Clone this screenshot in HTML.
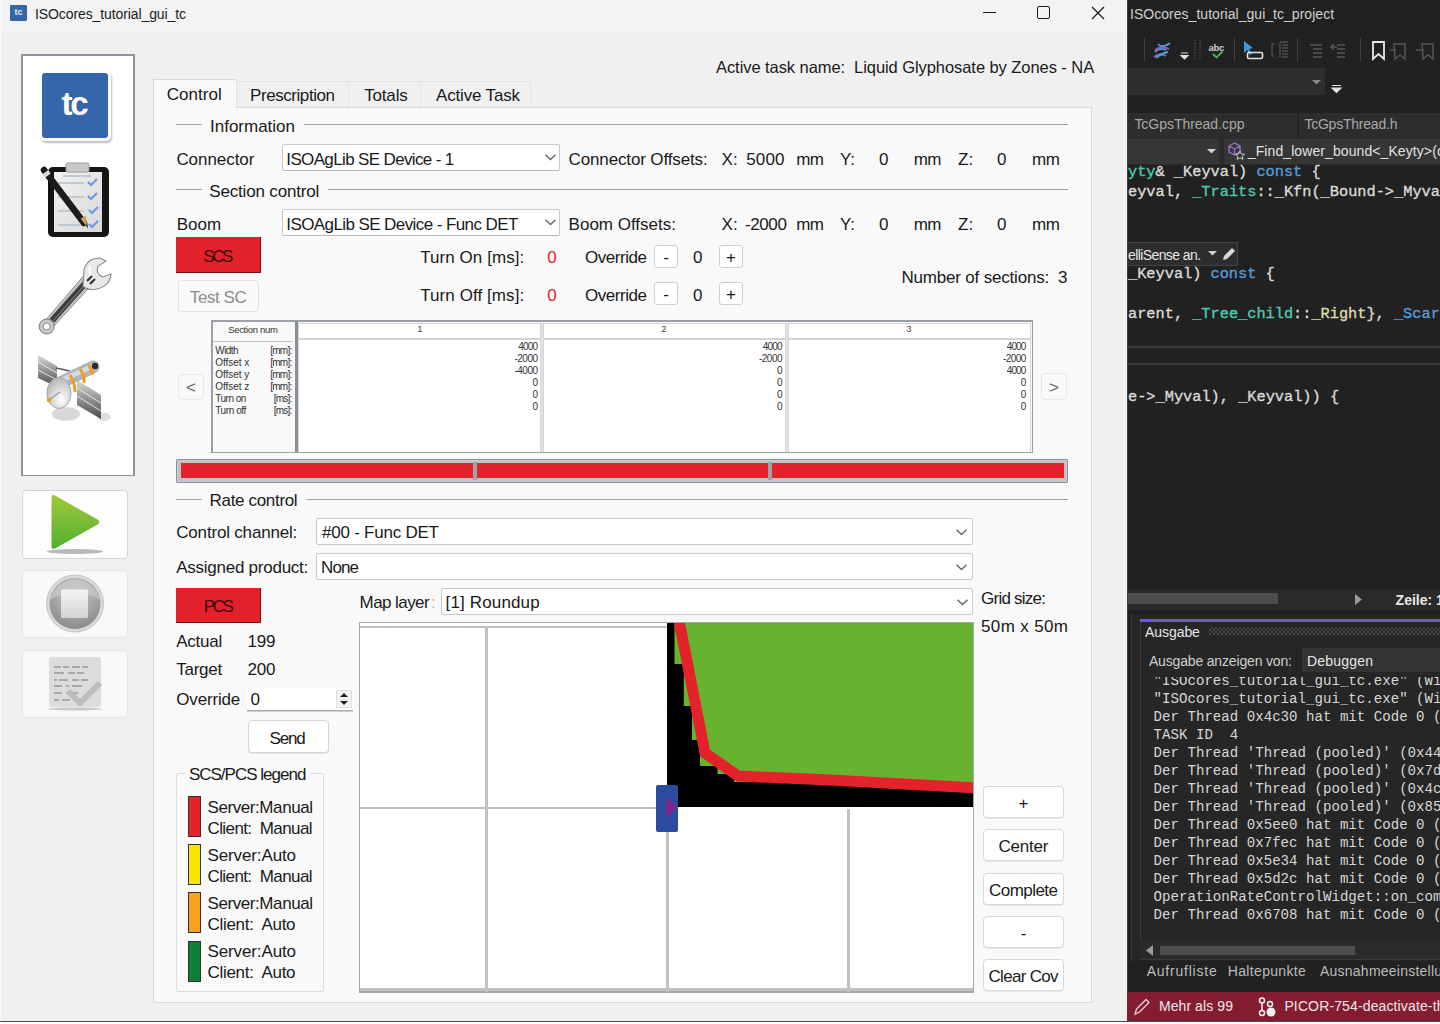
<!DOCTYPE html><html><head><meta charset="utf-8"><style>
html,body{margin:0;padding:0;width:1440px;height:1024px;overflow:hidden;background:#fff;}
.t{position:absolute;white-space:pre;font-family:'Liberation Sans',sans-serif;}
.r{position:absolute;box-sizing:border-box;}
svg{position:absolute;overflow:visible;}
</style></head><body>

<div class="r" style="left:0px;top:0px;width:1127px;height:1021px;background:#f0f0f0;"></div>
<div class="r" style="left:0px;top:0px;width:1127px;height:32px;background:#f3f3f3;"></div>
<div class="r" style="left:0px;top:0px;width:1px;height:1021px;background:#fafafa;"></div>
<div class="r" style="left:0px;top:1021px;width:1440px;height:3px;background:#ffffff;"></div>
<div class="r" style="left:10px;top:5px;width:17px;height:16px;background:#3466a9;border-radius:1px;"></div>
<div class="t" style="left:14.50px;top:8.38px;font-size:9px;line-height:9px;color:#e8eef8;letter-spacing:0.000px;font-family:'Liberation Sans',sans-serif;font-weight:bold;">tc</div>
<div class="t" style="left:35.00px;top:7.15px;font-size:14px;line-height:14px;color:#1a1a1a;letter-spacing:-0.098px;font-family:'Liberation Sans',sans-serif;">ISOcores_tutorial_gui_tc</div>
<div class="r" style="left:983px;top:12px;width:13px;height:1px;background:#1a1a1a;"></div>
<div class="r" style="left:1037px;top:6px;width:13px;height:13px;border:1px solid #1a1a1a;border-radius:2px;"></div>
<svg style="left:1091px;top:6px" width="14" height="14"><path d="M1 1L13 13M13 1L1 13" stroke="#1a1a1a" stroke-width="1.2"/></svg>
<div class="t" style="left:716.00px;top:59.03px;font-size:16.5px;line-height:16.5px;color:#1a1a1a;letter-spacing:-0.069px;font-family:'Liberation Sans',sans-serif;">Active&#32;task&#32;name:&#32;&#32;Liquid&#32;Glyphosate&#32;by&#32;Zones&#32;-&#32;NA</div>
<div class="r" style="left:21px;top:54px;width:114px;height:422px;background:#ffffff;border:1px solid #8e949c;border-width:2px 2px 1px 2px;"></div>
<div class="r" style="left:40px;top:71px;width:71px;height:70px;background:#fdfdfd;border-radius:5px;box-shadow:1px 2px 2px rgba(0,0,0,0.25);"></div>
<div class="r" style="left:42px;top:73px;width:66px;height:65px;background:#3466a9;border-radius:3px;"></div>
<div class="t" style="left:61.50px;top:87.07px;font-size:33px;line-height:33px;color:#ffffff;letter-spacing:-2.344px;font-family:'Liberation Sans',sans-serif;font-weight:bold;">tc</div>
<div class="r" style="left:22px;top:490px;width:106px;height:69px;background:#fdfdfd;border:1px solid #d4d4d4;border-radius:4px;"></div>
<div class="r" style="left:22px;top:570px;width:106px;height:68px;background:#f9f9f9;border:1px solid #e6e6e6;border-radius:4px;"></div>
<div class="r" style="left:22px;top:650px;width:106px;height:68px;background:#f9f9f9;border:1px solid #e6e6e6;border-radius:4px;"></div>
<div class="r" style="left:153px;top:107px;width:939px;height:896px;background:#f9f9f9;border:1px solid #dadada;"></div>
<div class="r" style="left:153px;top:79px;width:84px;height:29px;background:#f9f9f9;border:1px solid #dadada;border-bottom:none;"></div>
<div class="r" style="left:236px;top:81px;width:113px;height:26px;background:#f0f0f0;border:1px solid #e3e3e3;border-bottom:none;"></div>
<div class="r" style="left:349px;top:81px;width:72px;height:26px;background:#f0f0f0;border:1px solid #e3e3e3;border-bottom:none;border-left:none;"></div>
<div class="r" style="left:421px;top:81px;width:110px;height:26px;background:#f0f0f0;border:1px solid #e3e3e3;border-bottom:none;border-left:none;"></div>
<div class="r" style="left:154px;top:106px;width:82px;height:3px;background:#f9f9f9;"></div>
<div class="t" style="left:166.70px;top:85.61px;font-size:17px;line-height:17px;color:#1a1a1a;letter-spacing:0.034px;font-family:'Liberation Sans',sans-serif;">Control</div>
<div class="t" style="left:250.00px;top:86.61px;font-size:17px;line-height:17px;color:#1a1a1a;letter-spacing:-0.432px;font-family:'Liberation Sans',sans-serif;">Prescription</div>
<div class="t" style="left:364.30px;top:86.61px;font-size:17px;line-height:17px;color:#1a1a1a;letter-spacing:-0.201px;font-family:'Liberation Sans',sans-serif;">Totals</div>
<div class="t" style="left:436.00px;top:86.61px;font-size:17px;line-height:17px;color:#1a1a1a;letter-spacing:-0.166px;font-family:'Liberation Sans',sans-serif;">Active&#32;Task</div>
<div class="t" style="left:210.00px;top:117.61px;font-size:17px;line-height:17px;color:#1a1a1a;letter-spacing:-0.002px;font-family:'Liberation Sans',sans-serif;">Information</div>
<div class="r" style="left:176px;top:124px;width:26px;height:1px;background:#a0a0a0;"></div>
<div class="r" style="left:304px;top:124px;width:764px;height:1px;background:#a0a0a0;"></div>
<div class="t" style="left:209.30px;top:183.11px;font-size:17px;line-height:17px;color:#1a1a1a;letter-spacing:-0.174px;font-family:'Liberation Sans',sans-serif;">Section&#32;control</div>
<div class="r" style="left:176px;top:189px;width:26px;height:1px;background:#a0a0a0;"></div>
<div class="r" style="left:328px;top:189px;width:740px;height:1px;background:#a0a0a0;"></div>
<div class="t" style="left:209.60px;top:492.11px;font-size:17px;line-height:17px;color:#1a1a1a;letter-spacing:-0.331px;font-family:'Liberation Sans',sans-serif;">Rate&#32;control</div>
<div class="r" style="left:176px;top:499px;width:26px;height:1px;background:#a0a0a0;"></div>
<div class="r" style="left:307px;top:499px;width:761px;height:1px;background:#a0a0a0;"></div>
<div class="t" style="left:176.40px;top:151.11px;font-size:17px;line-height:17px;color:#1a1a1a;letter-spacing:-0.053px;font-family:'Liberation Sans',sans-serif;">Connector</div>
<div class="r" style="left:282px;top:144px;width:278px;height:27px;background:#ffffff;border:1px solid #c9c9c9;border-bottom-color:#b9b9b9;border-radius:2px;"></div>
<div class="t" style="left:286.30px;top:151.11px;font-size:17px;line-height:17px;color:#1a1a1a;letter-spacing:-0.638px;font-family:'Liberation Sans',sans-serif;">ISOAgLib&#32;SE&#32;Device&#32;-&#32;1</div>
<svg style="left:545px;top:154.0px" width="11" height="7"><path d="M0.5 0.8L5.5 5.5L10.5 0.8" stroke="#666" stroke-width="1.4" fill="none"/></svg>
<div class="t" style="left:568.60px;top:151.11px;font-size:17px;line-height:17px;color:#1a1a1a;letter-spacing:-0.140px;font-family:'Liberation Sans',sans-serif;">Connector&#32;Offsets:</div>
<div class="t" style="left:721.60px;top:151.11px;font-size:17px;line-height:17px;color:#1a1a1a;letter-spacing:0.000px;font-family:'Liberation Sans',sans-serif;">X:</div>
<div class="t" style="left:746.20px;top:151.11px;font-size:17px;line-height:17px;color:#1a1a1a;letter-spacing:0.162px;font-family:'Liberation Sans',sans-serif;">5000</div>
<div class="t" style="left:796.30px;top:151.11px;font-size:17px;line-height:17px;color:#1a1a1a;letter-spacing:-0.613px;font-family:'Liberation Sans',sans-serif;">mm</div>
<div class="t" style="left:839.90px;top:151.11px;font-size:17px;line-height:17px;color:#1a1a1a;letter-spacing:0.000px;font-family:'Liberation Sans',sans-serif;">Y:</div>
<div class="t" style="left:879.00px;top:151.11px;font-size:17px;line-height:17px;color:#1a1a1a;letter-spacing:0.000px;font-family:'Liberation Sans',sans-serif;">0</div>
<div class="t" style="left:913.80px;top:151.11px;font-size:17px;line-height:17px;color:#1a1a1a;letter-spacing:-0.613px;font-family:'Liberation Sans',sans-serif;">mm</div>
<div class="t" style="left:958.00px;top:151.11px;font-size:17px;line-height:17px;color:#1a1a1a;letter-spacing:0.000px;font-family:'Liberation Sans',sans-serif;">Z:</div>
<div class="t" style="left:997.00px;top:151.11px;font-size:17px;line-height:17px;color:#1a1a1a;letter-spacing:0.000px;font-family:'Liberation Sans',sans-serif;">0</div>
<div class="t" style="left:1032.00px;top:151.11px;font-size:17px;line-height:17px;color:#1a1a1a;letter-spacing:-0.312px;font-family:'Liberation Sans',sans-serif;">mm</div>
<div class="t" style="left:176.70px;top:216.11px;font-size:17px;line-height:17px;color:#1a1a1a;letter-spacing:0.000px;font-family:'Liberation Sans',sans-serif;">Boom</div>
<div class="r" style="left:282px;top:209px;width:278px;height:27px;background:#ffffff;border:1px solid #c9c9c9;border-bottom-color:#b9b9b9;border-radius:2px;"></div>
<div class="t" style="left:286.30px;top:216.11px;font-size:17px;line-height:17px;color:#1a1a1a;letter-spacing:-0.589px;font-family:'Liberation Sans',sans-serif;">ISOAgLib&#32;SE&#32;Device&#32;-&#32;Func&#32;DET</div>
<svg style="left:545px;top:219.0px" width="11" height="7"><path d="M0.5 0.8L5.5 5.5L10.5 0.8" stroke="#666" stroke-width="1.4" fill="none"/></svg>
<div class="t" style="left:568.60px;top:216.11px;font-size:17px;line-height:17px;color:#1a1a1a;letter-spacing:0.000px;font-family:'Liberation Sans',sans-serif;">Boom&#32;Offsets:</div>
<div class="t" style="left:721.60px;top:216.11px;font-size:17px;line-height:17px;color:#1a1a1a;letter-spacing:0.000px;font-family:'Liberation Sans',sans-serif;">X:</div>
<div class="t" style="left:744.90px;top:216.11px;font-size:17px;line-height:17px;color:#1a1a1a;letter-spacing:-0.367px;font-family:'Liberation Sans',sans-serif;">-2000</div>
<div class="t" style="left:796.30px;top:216.11px;font-size:17px;line-height:17px;color:#1a1a1a;letter-spacing:-0.613px;font-family:'Liberation Sans',sans-serif;">mm</div>
<div class="t" style="left:839.90px;top:216.11px;font-size:17px;line-height:17px;color:#1a1a1a;letter-spacing:0.000px;font-family:'Liberation Sans',sans-serif;">Y:</div>
<div class="t" style="left:879.00px;top:216.11px;font-size:17px;line-height:17px;color:#1a1a1a;letter-spacing:0.000px;font-family:'Liberation Sans',sans-serif;">0</div>
<div class="t" style="left:913.80px;top:216.11px;font-size:17px;line-height:17px;color:#1a1a1a;letter-spacing:-0.613px;font-family:'Liberation Sans',sans-serif;">mm</div>
<div class="t" style="left:958.00px;top:216.11px;font-size:17px;line-height:17px;color:#1a1a1a;letter-spacing:0.000px;font-family:'Liberation Sans',sans-serif;">Z:</div>
<div class="t" style="left:997.00px;top:216.11px;font-size:17px;line-height:17px;color:#1a1a1a;letter-spacing:0.000px;font-family:'Liberation Sans',sans-serif;">0</div>
<div class="t" style="left:1032.00px;top:216.11px;font-size:17px;line-height:17px;color:#1a1a1a;letter-spacing:-0.312px;font-family:'Liberation Sans',sans-serif;">mm</div>
<div class="r" style="left:176px;top:237px;width:85px;height:36px;background:#e3212b;border-right:1px solid #7a1015;border-bottom:1px solid #7a1015;"></div>
<div class="t" style="left:203.30px;top:248.11px;font-size:17px;line-height:17px;color:#3a0a0a;letter-spacing:-2.484px;font-family:'Liberation Sans',sans-serif;">SCS</div>
<div class="r" style="left:178px;top:280px;width:81px;height:32px;background:#fafafa;border:1px solid #e2e2e2;border-radius:3px;"></div>
<div class="t" style="left:189.80px;top:288.61px;font-size:17px;line-height:17px;color:#8c8c8c;letter-spacing:-0.419px;font-family:'Liberation Sans',sans-serif;">Test&#32;SC</div>
<div class="t" style="left:420.20px;top:249.11px;font-size:17px;line-height:17px;color:#1a1a1a;letter-spacing:0.062px;font-family:'Liberation Sans',sans-serif;">Turn&#32;On&#32;[ms]:</div>
<div class="t" style="left:420.20px;top:286.61px;font-size:17px;line-height:17px;color:#1a1a1a;letter-spacing:0.083px;font-family:'Liberation Sans',sans-serif;">Turn&#32;Off&#32;[ms]:</div>
<div class="t" style="left:547.30px;top:249.11px;font-size:17px;line-height:17px;color:#e3212b;letter-spacing:0.000px;font-family:'Liberation Sans',sans-serif;">0</div>
<div class="t" style="left:547.30px;top:286.61px;font-size:17px;line-height:17px;color:#e3212b;letter-spacing:0.000px;font-family:'Liberation Sans',sans-serif;">0</div>
<div class="t" style="left:585.00px;top:249.11px;font-size:17px;line-height:17px;color:#1a1a1a;letter-spacing:-0.453px;font-family:'Liberation Sans',sans-serif;">Override</div>
<div class="r" style="left:654px;top:245px;width:24px;height:23px;background:#ffffff;border:1px solid #cfcfcf;border-radius:3px;"></div>
<div class="t" style="left:663.17px;top:248.61px;font-size:17px;line-height:17px;color:#1a1a1a;letter-spacing:0.000px;font-family:'Liberation Sans',sans-serif;">-</div>
<div class="t" style="left:693.00px;top:249.11px;font-size:17px;line-height:17px;color:#1a1a1a;letter-spacing:0.000px;font-family:'Liberation Sans',sans-serif;">0</div>
<div class="r" style="left:719px;top:245px;width:24px;height:23px;background:#ffffff;border:1px solid #cfcfcf;border-radius:3px;"></div>
<div class="t" style="left:726.04px;top:248.61px;font-size:17px;line-height:17px;color:#1a1a1a;letter-spacing:0.000px;font-family:'Liberation Sans',sans-serif;">+</div>
<div class="t" style="left:585.00px;top:286.61px;font-size:17px;line-height:17px;color:#1a1a1a;letter-spacing:-0.453px;font-family:'Liberation Sans',sans-serif;">Override</div>
<div class="r" style="left:654px;top:282px;width:24px;height:23px;background:#ffffff;border:1px solid #cfcfcf;border-radius:3px;"></div>
<div class="t" style="left:663.17px;top:286.11px;font-size:17px;line-height:17px;color:#1a1a1a;letter-spacing:0.000px;font-family:'Liberation Sans',sans-serif;">-</div>
<div class="t" style="left:693.00px;top:286.61px;font-size:17px;line-height:17px;color:#1a1a1a;letter-spacing:0.000px;font-family:'Liberation Sans',sans-serif;">0</div>
<div class="r" style="left:719px;top:282px;width:24px;height:23px;background:#ffffff;border:1px solid #cfcfcf;border-radius:3px;"></div>
<div class="t" style="left:726.04px;top:286.11px;font-size:17px;line-height:17px;color:#1a1a1a;letter-spacing:0.000px;font-family:'Liberation Sans',sans-serif;">+</div>
<div class="t" style="left:901.50px;top:269.11px;font-size:17px;line-height:17px;color:#1a1a1a;letter-spacing:-0.192px;font-family:'Liberation Sans',sans-serif;">Number&#32;of&#32;sections:&#32;&#32;3</div>
<div class="r" style="left:178px;top:374px;width:26px;height:26px;background:#f9f9f9;border:1px solid #e8e8e8;border-radius:4px;"></div>
<div class="t" style="left:186.04px;top:379.11px;font-size:17px;line-height:17px;color:#666;letter-spacing:0.000px;font-family:'Liberation Sans',sans-serif;">&lt;</div>
<div class="r" style="left:1041px;top:373px;width:26px;height:27px;background:#f9f9f9;border:1px solid #e8e8e8;border-radius:4px;"></div>
<div class="t" style="left:1049.04px;top:379.11px;font-size:17px;line-height:17px;color:#666;letter-spacing:0.000px;font-family:'Liberation Sans',sans-serif;">&gt;</div>
<div class="r" style="left:211px;top:320px;width:822px;height:133px;background:#f9f9f9;border:1px solid #9aa0a8;border-width:2px 1px 1px 2px;"></div>
<div class="r" style="left:295px;top:321px;width:3px;height:131px;background:#8a9099;"></div>
<div class="r" style="left:213px;top:341px;width:80px;height:1px;background:#c4c4c4;"></div>
<div class="t" style="left:228.20px;top:324.96px;font-size:9.5px;line-height:9.5px;color:#333;letter-spacing:-0.320px;font-family:'Liberation Sans',sans-serif;">Section&#32;num</div>
<div class="t" style="left:215.30px;top:345.54px;font-size:10px;line-height:10px;color:#333;letter-spacing:-0.566px;font-family:'Liberation Sans',sans-serif;">Width</div>
<div class="t" style="left:270.20px;top:345.54px;font-size:10px;line-height:10px;color:#333;letter-spacing:-0.750px;font-family:'Liberation Sans',sans-serif;">[mm]:</div>
<div class="t" style="left:215.30px;top:357.54px;font-size:10px;line-height:10px;color:#333;letter-spacing:-0.040px;font-family:'Liberation Sans',sans-serif;">Offset&#32;x</div>
<div class="t" style="left:270.20px;top:357.54px;font-size:10px;line-height:10px;color:#333;letter-spacing:-0.750px;font-family:'Liberation Sans',sans-serif;">[mm]:</div>
<div class="t" style="left:215.30px;top:369.54px;font-size:10px;line-height:10px;color:#333;letter-spacing:-0.040px;font-family:'Liberation Sans',sans-serif;">Offset&#32;y</div>
<div class="t" style="left:270.20px;top:369.54px;font-size:10px;line-height:10px;color:#333;letter-spacing:-0.750px;font-family:'Liberation Sans',sans-serif;">[mm]:</div>
<div class="t" style="left:215.30px;top:381.54px;font-size:10px;line-height:10px;color:#333;letter-spacing:-0.040px;font-family:'Liberation Sans',sans-serif;">Offset&#32;z</div>
<div class="t" style="left:270.20px;top:381.54px;font-size:10px;line-height:10px;color:#333;letter-spacing:-0.750px;font-family:'Liberation Sans',sans-serif;">[mm]:</div>
<div class="t" style="left:215.30px;top:393.54px;font-size:10px;line-height:10px;color:#333;letter-spacing:-0.516px;font-family:'Liberation Sans',sans-serif;">Turn&#32;on</div>
<div class="t" style="left:273.70px;top:393.54px;font-size:10px;line-height:10px;color:#333;letter-spacing:-0.793px;font-family:'Liberation Sans',sans-serif;">[ms]:</div>
<div class="t" style="left:215.30px;top:405.54px;font-size:10px;line-height:10px;color:#333;letter-spacing:-0.415px;font-family:'Liberation Sans',sans-serif;">Turn&#32;off</div>
<div class="t" style="left:273.70px;top:405.54px;font-size:10px;line-height:10px;color:#333;letter-spacing:-0.793px;font-family:'Liberation Sans',sans-serif;">[ms]:</div>
<div class="r" style="left:298px;top:323px;width:243px;height:129px;background:#ffffff;border:1px solid #d6d6d6;border-bottom:none;"></div>
<div class="r" style="left:299px;top:338px;width:241px;height:2px;background:#d4d4d4;"></div>
<div class="t" style="left:417.36px;top:324.46px;font-size:9.5px;line-height:9.5px;color:#444;letter-spacing:0.000px;font-family:'Liberation Sans',sans-serif;">1</div>
<div class="t" style="left:518.30px;top:341.94px;font-size:10px;line-height:10px;color:#333;letter-spacing:-0.850px;font-family:'Liberation Sans',sans-serif;">4000</div>
<div class="t" style="left:514.50px;top:353.98px;font-size:10px;line-height:10px;color:#333;letter-spacing:-0.520px;font-family:'Liberation Sans',sans-serif;">-2000</div>
<div class="t" style="left:514.50px;top:366.01px;font-size:10px;line-height:10px;color:#333;letter-spacing:-0.520px;font-family:'Liberation Sans',sans-serif;">-4000</div>
<div class="t" style="left:532.44px;top:378.06px;font-size:10px;line-height:10px;color:#333;letter-spacing:0.000px;font-family:'Liberation Sans',sans-serif;">0</div>
<div class="t" style="left:532.44px;top:390.09px;font-size:10px;line-height:10px;color:#333;letter-spacing:0.000px;font-family:'Liberation Sans',sans-serif;">0</div>
<div class="t" style="left:532.44px;top:402.13px;font-size:10px;line-height:10px;color:#333;letter-spacing:0.000px;font-family:'Liberation Sans',sans-serif;">0</div>
<div class="r" style="left:543px;top:323px;width:243px;height:129px;background:#ffffff;border:1px solid #d6d6d6;border-bottom:none;"></div>
<div class="r" style="left:544px;top:338px;width:241px;height:2px;background:#d4d4d4;"></div>
<div class="t" style="left:661.36px;top:324.46px;font-size:9.5px;line-height:9.5px;color:#444;letter-spacing:0.000px;font-family:'Liberation Sans',sans-serif;">2</div>
<div class="t" style="left:762.80px;top:341.94px;font-size:10px;line-height:10px;color:#333;letter-spacing:-0.850px;font-family:'Liberation Sans',sans-serif;">4000</div>
<div class="t" style="left:759.00px;top:353.98px;font-size:10px;line-height:10px;color:#333;letter-spacing:-0.520px;font-family:'Liberation Sans',sans-serif;">-2000</div>
<div class="t" style="left:776.94px;top:366.01px;font-size:10px;line-height:10px;color:#333;letter-spacing:0.000px;font-family:'Liberation Sans',sans-serif;">0</div>
<div class="t" style="left:776.94px;top:378.06px;font-size:10px;line-height:10px;color:#333;letter-spacing:0.000px;font-family:'Liberation Sans',sans-serif;">0</div>
<div class="t" style="left:776.94px;top:390.09px;font-size:10px;line-height:10px;color:#333;letter-spacing:0.000px;font-family:'Liberation Sans',sans-serif;">0</div>
<div class="t" style="left:776.94px;top:402.13px;font-size:10px;line-height:10px;color:#333;letter-spacing:0.000px;font-family:'Liberation Sans',sans-serif;">0</div>
<div class="r" style="left:788px;top:323px;width:243px;height:129px;background:#ffffff;border:1px solid #d6d6d6;border-bottom:none;"></div>
<div class="r" style="left:789px;top:338px;width:241px;height:2px;background:#d4d4d4;"></div>
<div class="t" style="left:906.36px;top:324.46px;font-size:9.5px;line-height:9.5px;color:#444;letter-spacing:0.000px;font-family:'Liberation Sans',sans-serif;">3</div>
<div class="t" style="left:1006.70px;top:341.94px;font-size:10px;line-height:10px;color:#333;letter-spacing:-0.850px;font-family:'Liberation Sans',sans-serif;">4000</div>
<div class="t" style="left:1002.90px;top:353.98px;font-size:10px;line-height:10px;color:#333;letter-spacing:-0.520px;font-family:'Liberation Sans',sans-serif;">-2000</div>
<div class="t" style="left:1006.70px;top:366.01px;font-size:10px;line-height:10px;color:#333;letter-spacing:-0.850px;font-family:'Liberation Sans',sans-serif;">4000</div>
<div class="t" style="left:1020.84px;top:378.06px;font-size:10px;line-height:10px;color:#333;letter-spacing:0.000px;font-family:'Liberation Sans',sans-serif;">0</div>
<div class="t" style="left:1020.84px;top:390.09px;font-size:10px;line-height:10px;color:#333;letter-spacing:0.000px;font-family:'Liberation Sans',sans-serif;">0</div>
<div class="t" style="left:1020.84px;top:402.13px;font-size:10px;line-height:10px;color:#333;letter-spacing:0.000px;font-family:'Liberation Sans',sans-serif;">0</div>
<div class="r" style="left:541px;top:323px;width:2px;height:129px;background:#e2e2e2;"></div>
<div class="r" style="left:786px;top:323px;width:2px;height:129px;background:#e2e2e2;"></div>
<div class="r" style="left:176px;top:459px;width:892px;height:24px;background:#c9cdd2;border:1px solid #8c9199;border-radius:1px;"></div>
<div class="r" style="left:178px;top:461px;width:888px;height:20px;background:#bfc3c8;"></div>
<div class="r" style="left:181px;top:463px;width:883px;height:15px;background:#e3222b;"></div>
<div class="r" style="left:473px;top:462px;width:4px;height:18px;background:#9ea3a8;"></div>
<div class="r" style="left:768px;top:462px;width:4px;height:18px;background:#9ea3a8;"></div>
<div class="t" style="left:176.25px;top:524.11px;font-size:17px;line-height:17px;color:#1a1a1a;letter-spacing:-0.185px;font-family:'Liberation Sans',sans-serif;">Control&#32;channel:</div>
<div class="r" style="left:316px;top:518px;width:657px;height:27px;background:#ffffff;border:1px solid #c9c9c9;border-radius:2px;"></div>
<div class="t" style="left:322.00px;top:524.11px;font-size:17px;line-height:17px;color:#1a1a1a;letter-spacing:-0.230px;font-family:'Liberation Sans',sans-serif;">#00&#32;-&#32;Func&#32;DET</div>
<svg style="left:956px;top:529px" width="11" height="7"><path d="M0.5 0.8L5.5 5.5L10.5 0.8" stroke="#666" stroke-width="1.4" fill="none"/></svg>
<div class="t" style="left:176.25px;top:558.61px;font-size:17px;line-height:17px;color:#1a1a1a;letter-spacing:-0.254px;font-family:'Liberation Sans',sans-serif;">Assigned&#32;product:</div>
<div class="r" style="left:316px;top:553px;width:657px;height:27px;background:#ffffff;border:1px solid #c9c9c9;border-radius:2px;"></div>
<div class="t" style="left:321.00px;top:558.61px;font-size:17px;line-height:17px;color:#1a1a1a;letter-spacing:-0.880px;font-family:'Liberation Sans',sans-serif;">None</div>
<svg style="left:956px;top:564px" width="11" height="7"><path d="M0.5 0.8L5.5 5.5L10.5 0.8" stroke="#666" stroke-width="1.4" fill="none"/></svg>
<div class="r" style="left:176px;top:588px;width:85px;height:35px;background:#e3212b;border-right:1px solid #7a1015;border-bottom:1px solid #7a1015;"></div>
<div class="t" style="left:203.80px;top:598.11px;font-size:17px;line-height:17px;color:#3a0a0a;letter-spacing:-2.484px;font-family:'Liberation Sans',sans-serif;">PCS</div>
<div class="t" style="left:359.60px;top:594.11px;font-size:17px;line-height:17px;color:#1a1a1a;letter-spacing:-0.578px;font-family:'Liberation Sans',sans-serif;">Map&#32;layer</div>
<div class="t" style="left:431.00px;top:594.11px;font-size:17px;line-height:17px;color:#d8b48a;letter-spacing:0.000px;font-family:'Liberation Sans',sans-serif;">:</div>
<div class="r" style="left:441px;top:588px;width:532px;height:27px;background:#ffffff;border:1px solid #c9c9c9;border-radius:2px;"></div>
<div class="t" style="left:445.60px;top:594.11px;font-size:17px;line-height:17px;color:#1a1a1a;letter-spacing:0.139px;font-family:'Liberation Sans',sans-serif;">[1]&#32;Roundup</div>
<svg style="left:957px;top:599px" width="11" height="7"><path d="M0.5 0.8L5.5 5.5L10.5 0.8" stroke="#666" stroke-width="1.4" fill="none"/></svg>
<div class="t" style="left:981.00px;top:590.11px;font-size:17px;line-height:17px;color:#1a1a1a;letter-spacing:-0.753px;font-family:'Liberation Sans',sans-serif;">Grid&#32;size:</div>
<div class="t" style="left:981.00px;top:618.11px;font-size:17px;line-height:17px;color:#1a1a1a;letter-spacing:0.367px;font-family:'Liberation Sans',sans-serif;">50m&#32;x&#32;50m</div>
<div class="t" style="left:176.25px;top:633.11px;font-size:17px;line-height:17px;color:#1a1a1a;letter-spacing:-0.250px;font-family:'Liberation Sans',sans-serif;">Actual</div>
<div class="t" style="left:247.50px;top:633.11px;font-size:17px;line-height:17px;color:#1a1a1a;letter-spacing:-0.180px;font-family:'Liberation Sans',sans-serif;">199</div>
<div class="t" style="left:176.25px;top:661.11px;font-size:17px;line-height:17px;color:#1a1a1a;letter-spacing:-0.247px;font-family:'Liberation Sans',sans-serif;">Target</div>
<div class="t" style="left:247.50px;top:661.11px;font-size:17px;line-height:17px;color:#1a1a1a;letter-spacing:-0.180px;font-family:'Liberation Sans',sans-serif;">200</div>
<div class="t" style="left:176.25px;top:691.11px;font-size:17px;line-height:17px;color:#1a1a1a;letter-spacing:-0.167px;font-family:'Liberation Sans',sans-serif;">Override</div>
<div class="r" style="left:247px;top:688px;width:106px;height:23px;background:#ffffff;border-bottom:1px solid #a8a8a8;box-shadow:0 1px 0 #d0d0d0;"></div>
<div class="t" style="left:250.40px;top:691.11px;font-size:17px;line-height:17px;color:#1a1a1a;letter-spacing:0.000px;font-family:'Liberation Sans',sans-serif;">0</div>
<div class="r" style="left:336px;top:690px;width:16px;height:18px;background:#f3f3f3;border:1px solid #e0e0e0;"></div>
<svg style="left:339px;top:692px" width="10" height="14"><path d="M1 5L5 1L9 5Z M1 9L5 13L9 9Z" fill="#222"/></svg>
<div class="r" style="left:248px;top:720px;width:81px;height:33px;background:#ffffff;border:1px solid #d6d6d6;border-radius:4px;box-shadow:0 1px 0 #e6e6e6;"></div>
<div class="t" style="left:269.50px;top:730.11px;font-size:17px;line-height:17px;color:#1a1a1a;letter-spacing:-1.134px;font-family:'Liberation Sans',sans-serif;">Send</div>
<div class="r" style="left:176px;top:773px;width:148px;height:219px;border:1px solid #dcdcdc;border-radius:2px;"></div>
<div class="r" style="left:186px;top:765px;width:124px;height:15px;background:#f9f9f9;"></div>
<div class="t" style="left:188.90px;top:766.11px;font-size:17px;line-height:17px;color:#1a1a1a;letter-spacing:-0.994px;font-family:'Liberation Sans',sans-serif;">SCS/PCS&#32;legend</div>
<div class="r" style="left:188px;top:796.0px;width:13px;height:41.0px;background:#e3222b;border:1px solid #303030;"></div>
<div class="t" style="left:207.50px;top:798.61px;font-size:17px;line-height:17px;color:#1a1a1a;letter-spacing:-0.419px;font-family:'Liberation Sans',sans-serif;">Server:Manual</div>
<div class="t" style="left:207.50px;top:819.61px;font-size:17px;line-height:17px;color:#1a1a1a;letter-spacing:-0.598px;font-family:'Liberation Sans',sans-serif;">Client:&#32;&#32;Manual</div>
<div class="r" style="left:188px;top:844.2px;width:13px;height:41.0px;background:#f7e600;border:1px solid #303030;"></div>
<div class="t" style="left:207.50px;top:846.81px;font-size:17px;line-height:17px;color:#1a1a1a;letter-spacing:-0.125px;font-family:'Liberation Sans',sans-serif;">Server:Auto</div>
<div class="t" style="left:207.50px;top:867.81px;font-size:17px;line-height:17px;color:#1a1a1a;letter-spacing:-0.598px;font-family:'Liberation Sans',sans-serif;">Client:&#32;&#32;Manual</div>
<div class="r" style="left:188px;top:892.4px;width:13px;height:41.0px;background:#f6a21e;border:1px solid #303030;"></div>
<div class="t" style="left:207.50px;top:895.01px;font-size:17px;line-height:17px;color:#1a1a1a;letter-spacing:-0.419px;font-family:'Liberation Sans',sans-serif;">Server:Manual</div>
<div class="t" style="left:207.50px;top:916.01px;font-size:17px;line-height:17px;color:#1a1a1a;letter-spacing:-0.305px;font-family:'Liberation Sans',sans-serif;">Client:&#32;&#32;Auto</div>
<div class="r" style="left:188px;top:940.6px;width:13px;height:41.0px;background:#0f8035;border:1px solid #303030;"></div>
<div class="t" style="left:207.50px;top:943.21px;font-size:17px;line-height:17px;color:#1a1a1a;letter-spacing:-0.125px;font-family:'Liberation Sans',sans-serif;">Server:Auto</div>
<div class="t" style="left:207.50px;top:964.21px;font-size:17px;line-height:17px;color:#1a1a1a;letter-spacing:-0.305px;font-family:'Liberation Sans',sans-serif;">Client:&#32;&#32;Auto</div>
<div class="r" style="left:359px;top:622px;width:615px;height:371px;background:#ffffff;border:1px solid #a5a9ae;border-width:1px 1px 2px 1px;"></div>
<div class="r" style="left:360px;top:626px;width:307px;height:2px;background:#c0c0c0;"></div>
<div class="r" style="left:485px;top:626px;width:3px;height:182px;background:#c0c0c0;"></div>
<div class="r" style="left:360px;top:807px;width:307px;height:2px;background:#c0c0c0;"></div>
<div class="r" style="left:485px;top:809px;width:3px;height:183px;background:#c0c0c0;"></div>
<div class="r" style="left:666px;top:809px;width:3px;height:183px;background:#c0c0c0;"></div>
<div class="r" style="left:847px;top:809px;width:3px;height:183px;background:#c0c0c0;"></div>
<div class="r" style="left:360px;top:988px;width:613px;height:3px;background:#c0c0c0;"></div>
<svg style="left:0;top:0" width="1440" height="1024">
<defs><clipPath id="mapclip"><rect x="667" y="623" width="306" height="184"/></clipPath></defs><g clip-path="url(#mapclip)">
<rect x="667" y="623" width="306" height="184" fill="#000"/>
<path d="M674.5 623 L674.5 664 L683.8 664 L683.8 706 L692 706 L692 740 L700 740 L700 766 L717.6 766 L717.6 774 L734 774 L734 782 L756 782 L973 786 L973 623 Z" fill="#67b22f"/>
<path d="M678.7 619 L705 753 L738 776 L830 780 L976 788" stroke="#e3222b" stroke-width="11" fill="none" stroke-linejoin="round"/></g>

</svg>
<div class="r" style="left:656px;top:785px;width:22px;height:47px;background:#2c4a9e;border-radius:2px;"></div>
<svg style="left:666px;top:797px" width="12" height="20"><path d="M0 0L12 10L0 20Z" fill="#7a2a8a"/></svg>
<div class="r" style="left:983px;top:786px;width:81px;height:32px;background:#ffffff;border:1px solid #d9d9d9;border-radius:4px;box-shadow:0 1px 0 #e8e8e8;"></div>
<div class="t" style="left:1018.54px;top:794.61px;font-size:17px;line-height:17px;color:#1a1a1a;letter-spacing:0.000px;font-family:'Liberation Sans',sans-serif;">+</div>
<div class="r" style="left:983px;top:829px;width:81px;height:32px;background:#ffffff;border:1px solid #d9d9d9;border-radius:4px;box-shadow:0 1px 0 #e8e8e8;"></div>
<div class="t" style="left:998.50px;top:837.61px;font-size:17px;line-height:17px;color:#1a1a1a;letter-spacing:-0.203px;font-family:'Liberation Sans',sans-serif;">Center</div>
<div class="r" style="left:983px;top:873px;width:81px;height:32px;background:#ffffff;border:1px solid #d9d9d9;border-radius:4px;box-shadow:0 1px 0 #e8e8e8;"></div>
<div class="t" style="left:989.00px;top:881.61px;font-size:17px;line-height:17px;color:#1a1a1a;letter-spacing:-0.536px;font-family:'Liberation Sans',sans-serif;">Complete</div>
<div class="r" style="left:983px;top:916px;width:81px;height:32px;background:#ffffff;border:1px solid #d9d9d9;border-radius:4px;box-shadow:0 1px 0 #e8e8e8;"></div>
<div class="t" style="left:1020.67px;top:924.61px;font-size:17px;line-height:17px;color:#1a1a1a;letter-spacing:0.000px;font-family:'Liberation Sans',sans-serif;">-</div>
<div class="r" style="left:983px;top:959px;width:81px;height:32px;background:#ffffff;border:1px solid #d9d9d9;border-radius:4px;box-shadow:0 1px 0 #e8e8e8;"></div>
<div class="t" style="left:988.50px;top:967.61px;font-size:17px;line-height:17px;color:#1a1a1a;letter-spacing:-0.697px;font-family:'Liberation Sans',sans-serif;">Clear&#32;Cov</div>
<svg style="left:0;top:0" width="300" height="760">
<defs>
<linearGradient id="gpaper" x1="0" y1="0" x2="1" y2="1"><stop offset="0" stop-color="#f2f2f2"/><stop offset="1" stop-color="#d8d8d8"/></linearGradient>
<linearGradient id="gplay" x1="0" y1="0" x2="0" y2="1"><stop offset="0" stop-color="#a2c93a"/><stop offset="1" stop-color="#4fae30"/></linearGradient>
<radialGradient id="gstop" cx="0.5" cy="0.3" r="0.7"><stop offset="0" stop-color="#c8c8c8"/><stop offset="0.55" stop-color="#a8a8a8"/><stop offset="1" stop-color="#8a8a8a"/></radialGradient>
<linearGradient id="gsq" x1="0" y1="0" x2="0" y2="1"><stop offset="0" stop-color="#f4f4f4"/><stop offset="1" stop-color="#d4d4d4"/></linearGradient>
<linearGradient id="gwr" x1="0" y1="0" x2="1" y2="0"><stop offset="0" stop-color="#e8e8e8"/><stop offset="0.5" stop-color="#555"/><stop offset="1" stop-color="#cfcfcf"/></linearGradient>
<linearGradient id="gpanel" x1="0" y1="0" x2="0" y2="1"><stop offset="0" stop-color="#d8d8d8"/><stop offset="1" stop-color="#4a4a4a"/></linearGradient>
<radialGradient id="gdish" cx="0.6" cy="0.7" r="0.7"><stop offset="0" stop-color="#ffffff"/><stop offset="1" stop-color="#b8b8b8"/></radialGradient>
</defs>
<!-- clipboard -->
<rect x="48" y="167" width="61" height="70" rx="5" fill="#141414"/>
<rect x="54" y="172" width="48" height="60" fill="url(#gpaper)"/>
<rect x="66" y="163" width="23" height="9" rx="1.5" fill="#c9c9c9" stroke="#9a9a9a" stroke-width="1"/>
<path d="M63 176h28 M58 183h26 M58 197h26 M58 211h26 M58 225h26" stroke="#b4c0cc" stroke-width="1.6"/>
<path d="M88 182l3 3 6-6 M88 196l3 3 6-6 M89 210l3 3 6-6 M89 224l3 3 6-6" stroke="#6a9be0" stroke-width="2.2" fill="none"/>
<path d="M44 170 L84 223" stroke="#1c1c1c" stroke-width="6.5" stroke-linecap="round"/>
<path d="M45.5 172 L48 175.5" stroke="#dcdcdc" stroke-width="6.5"/>
<path d="M80.5 218.5 L88 228.5 L85.5 216 Z" fill="#c8a060"/>
<path d="M86 225 L88 228.5 L87.2 223.5 Z" fill="#111"/>
<!-- wrench -->
<path d="M43 323.2 L83.5 276 L92.5 284 L50.4 329.8 Z" fill="#c4c4c4" stroke="#8a8a8a" stroke-width="1"/>
<path d="M49.6 318.8 L84.1 280 L88.6 284 L54.4 322.5 Z" fill="#3c3c3c"/>
<path d="M53 321 L86.5 283" stroke="#707070" stroke-width="1.2"/>
<circle cx="46.7" cy="326.5" r="7.5" fill="#c8c8c8" stroke="#7a7a7a" stroke-width="1"/>
<circle cx="46.7" cy="326.5" r="3.4" fill="#ffffff" stroke="#777" stroke-width="0.8"/>
<path d="M84 270 Q87 258 100 258 L106 261 L98 266 Q95 274 103 277 L111 274 Q110 286 97 289 Q88 291 83 286 Z" fill="#e9e9e9" stroke="#8a8a8a" stroke-width="1.1"/>
<path d="M90 266 Q88 275 95 282" stroke="#ffffff" stroke-width="2" fill="none"/>
<path d="M87 281 l5 -5 M90 284 l5 -5" stroke="#333" stroke-width="2.2"/>
<!-- satellite -->
<ellipse cx="66" cy="414" rx="14" ry="7" fill="#d4d4d4" opacity="0.9"/>
<ellipse cx="104" cy="417" rx="7" ry="4" fill="#dcdcdc" opacity="0.9"/>
<path d="M38 355 L57 366 L57 387 L38 378 Z" fill="url(#gpanel)"/>
<path d="M38 362 L57 373 M38 370 L57 380" stroke="#eeeeee" stroke-width="0.9"/>
<path d="M56 368 L70 371" stroke="#5a5a5a" stroke-width="1.5"/>
<path d="M77 380 L101 395 L101 419 L77 405 Z" fill="url(#gpanel)"/>
<path d="M77 388 L101 403 M77 396 L101 411" stroke="#eeeeee" stroke-width="0.9"/>
<path d="M62 382 L93 367" stroke="#aeb4ba" stroke-width="13" stroke-linecap="round"/>
<path d="M60 381 L93 366" stroke="#d6dadf" stroke-width="5" stroke-linecap="round"/>
<path d="M70 375 q5 8 5 17 M80 369 q5 7 4 14 M89 365 q3 5 3 10" stroke="#f29c1f" stroke-width="3" fill="none"/>
<circle cx="95" cy="366" r="3.2" fill="#2a2a2a"/>
<ellipse cx="59" cy="393" rx="12" ry="15.5" fill="url(#gdish)" stroke="#a0a6ac" stroke-width="1"/>
<path d="M49 400 L60 392" stroke="#8a9aaa" stroke-width="1.3"/>
<circle cx="49" cy="400" r="2.3" fill="#f29c1f"/>
<!-- play -->
<ellipse cx="75" cy="551.5" rx="28" ry="2.5" fill="#9a9a9a" opacity="0.7"/>
<path d="M55 495.5 Q51.5 494 51.5 498 L51.5 546 Q51.5 550 55 548.5 L97.5 524.5 Q101 522 97.5 519.5 Z" fill="url(#gplay)"/>
<!-- stop -->
<circle cx="75" cy="603.5" r="28.5" fill="#d9d9d9" stroke="#c4c4c4" stroke-width="1"/>
<circle cx="75" cy="603.5" r="25.5" fill="url(#gstop)"/>
<path d="M50 600 Q75 585 100 600 A25.5 25.5 0 0 0 50 600 Z" fill="#cfcfcf" opacity="0.6"/>
<rect x="61" y="589.5" width="27" height="28.5" rx="1.5" fill="url(#gsq)"/>
<!-- doc -->
<ellipse cx="75" cy="709" rx="27" ry="1.5" fill="#c8c8c8"/>
<rect x="49" y="657" width="52" height="50" rx="3" fill="#dcdcdc"/>
<path d="M54 667h7 M63 667h6 M72 667h8 M82 667h6 M54 673h10 M68 673h7 M77 673h7 M54 680h3 M59 680h9 M72 680h7 M81 680h7 M54 686h8 M66 686h3 M72 686h10 M54 693h8 M66 693h3 M72 693h6 M54 700h5 M62 700h8 M74 700h12" stroke="#a9a9a9" stroke-width="2.2"/>
<path d="M68 691 L80 703 L100 683" stroke="#bdbdbd" stroke-width="6" fill="none" stroke-linejoin="round"/>
</svg>
<div class="r" style="left:1127px;top:0px;width:313px;height:1021px;background:#212121;"></div>
<div class="r" style="left:1127px;top:0px;width:1px;height:1021px;background:#3a3a3a;"></div>
<div class="t" style="left:1130.00px;top:7.15px;font-size:14px;line-height:14px;color:#d0d0d0;letter-spacing:0.031px;font-family:'Liberation Sans',sans-serif;">ISOcores_tutorial_gui_tc_project</div>
<div class="r" style="left:1144px;top:38px;width:1px;height:24px;background:#3f3f3f;"></div>
<div class="r" style="left:1234px;top:38px;width:1px;height:24px;background:#3f3f3f;"></div>
<div class="r" style="left:1297px;top:38px;width:1px;height:24px;background:#3f3f3f;"></div>
<div class="r" style="left:1360px;top:38px;width:1px;height:24px;background:#3f3f3f;"></div>
<svg style="left:0;top:0" width="1440" height="1024">
<path d="M1158 44 Q1162 49 1170 43 M1155 52 Q1159 47 1166 50" stroke="#4aa3df" stroke-width="1.8" fill="none"/>
<path d="M1155 50 Q1162 45 1169 49 M1154 57 Q1160 52 1166 56" stroke="#9b59b6" stroke-width="1.8" fill="none"/>
<path d="M1156 58 Q1162 53 1168 52" stroke="#4aa3df" stroke-width="1.8" fill="none"/>
<path d="M1181 53 h7 M1181 55.5 h7 l-3.5 3.5 z" stroke="#e0e0e0" stroke-width="1.2" fill="#e0e0e0"/>
<path d="M1195 40 v20 M1200 40 v20" stroke="#4a4a4a" stroke-width="1.3" stroke-dasharray="1.5 1.5"/>
<text x="1208.5" y="51" font-family="Liberation Sans" font-size="9.5" fill="#cfcfcf" font-weight="bold" letter-spacing="-0.3">abc</text>
<path d="M1213 54 l3.5 3.5 l6 -6" stroke="#4caf50" stroke-width="1.8" fill="none"/>
<path d="M1244 41 l0 12 l3 -3 l3 5 l2 -1 l-3 -5 l4 -1 z" fill="#3b9be0"/>
<rect x="1247.5" y="52.5" width="15" height="6" rx="1.5" stroke="#e0e0e0" stroke-width="1.6" fill="none"/>
<path d="M1274 44 h-2 v12 h2 M1280 42 h8 M1282 45 h6 M1282 48 h6 M1282 51 h6 M1282 54 h6 M1282 57 h6 M1280 42 v16" stroke="#505050" stroke-width="1.3" fill="none"/>
<path d="M1310 45 h12 M1313 49 h9 M1313 53 h9 M1313 57 h9" stroke="#555" stroke-width="1.5"/>
<path d="M1334 44 l-3 3 l3 3 M1331 47 h6 M1337 45 h8 M1337 49 h8 M1337 53 h8 M1337 57 h8" stroke="#555" stroke-width="1.5" fill="none"/>
<path d="M1373 42 h11 v17 l-5.5 -5 l-5.5 5 z" stroke="#e8e8e8" stroke-width="1.8" fill="none"/>
<path d="M1394 44 h11 v15 l-5 -4 l-5 4 z M1390 50 h6" stroke="#555" stroke-width="1.5" fill="none"/>
<path d="M1422 44 h11 v15 l-5 -4 l-5 4 z M1416 50 h8" stroke="#555" stroke-width="1.5" fill="none"/>
</svg>
<div class="r" style="left:1128px;top:68px;width:197px;height:27px;background:#2e2e2e;"></div>
<svg style="left:1312px;top:80px" width="10" height="6"><path d="M0 0h9l-4.5 4.5z" fill="#8a8a8a"/></svg>
<svg style="left:1332px;top:85px" width="10" height="10"><path d="M0 0.5h9M0 3h9l-4.5 4.5z" stroke="#e0e0e0" stroke-width="1.2" fill="#e0e0e0"/></svg>
<div class="r" style="left:1128px;top:113px;width:312px;height:25px;background:#252525;"></div>
<div class="r" style="left:1128px;top:113px;width:169px;height:25px;background:#2d2d2d;"></div>
<div class="r" style="left:1299px;top:113px;width:141px;height:25px;background:#2d2d2d;"></div>
<div class="t" style="left:1134.40px;top:117.15px;font-size:14px;line-height:14px;color:#a8a8a8;letter-spacing:-0.032px;font-family:'Liberation Sans',sans-serif;">TcGpsThread.cpp</div>
<div class="t" style="left:1304.40px;top:117.15px;font-size:14px;line-height:14px;color:#a8a8a8;letter-spacing:-0.223px;font-family:'Liberation Sans',sans-serif;">TcGpsThread.h</div>
<div class="r" style="left:1128px;top:138px;width:312px;height:27px;background:#2b2b2b;"></div>
<div class="r" style="left:1128px;top:139px;width:91px;height:25px;background:#363636;"></div>
<div class="r" style="left:1224px;top:139px;width:216px;height:25px;background:#363636;"></div>
<svg style="left:1207px;top:149px" width="10" height="6"><path d="M0 0h9l-4.5 4.5z" fill="#d0d0d0"/></svg>
<svg style="left:1227px;top:141px" width="22" height="22"><path d="M2 5 L7.5 2 L13 5 L13 11 L7.5 14 L2 11 Z M2 5 L7.5 8 L13 5 M7.5 8 V14" stroke="#9b6fd0" stroke-width="1.4" fill="none"/><path d="M13 10 l1.5 3 3 .3 -2.3 2 .7 3 -2.9 -1.6 -2.9 1.6 .7 -3 -2.3 -2 3 -.3z" fill="#333" stroke="#d0d0d0" stroke-width="1"/></svg>
<div class="t" style="left:1247.80px;top:144.15px;font-size:14px;line-height:14px;color:#e0e0e0;letter-spacing:0.088px;font-family:'Liberation Sans',sans-serif;">_Find_lower_bound&lt;_Keyty&gt;(c</div>
<div class="t" style="left:1128.00px;top:165.05px;font-size:15.3px;line-height:15.3px;color:#4ec9b0;letter-spacing:-0.003px;font-family:'Liberation Mono',monospace;-webkit-text-stroke:0.35px #4ec9b0;">yty</div>
<div class="t" style="left:1155.51px;top:165.05px;font-size:15.3px;line-height:15.3px;color:#dadada;letter-spacing:-0.002px;font-family:'Liberation Mono',monospace;-webkit-text-stroke:0.35px #dadada;">&amp;&#32;_Keyval)&#32;</div>
<div class="t" style="left:1256.38px;top:165.05px;font-size:15.3px;line-height:15.3px;color:#569cd6;letter-spacing:-0.002px;font-family:'Liberation Mono',monospace;-webkit-text-stroke:0.35px #569cd6;">const</div>
<div class="t" style="left:1302.23px;top:165.05px;font-size:15.3px;line-height:15.3px;color:#dadada;letter-spacing:-0.004px;font-family:'Liberation Mono',monospace;-webkit-text-stroke:0.35px #dadada;">&#32;{</div>
<div class="t" style="left:1128.00px;top:185.05px;font-size:15.3px;line-height:15.3px;color:#dadada;letter-spacing:-0.002px;font-family:'Liberation Mono',monospace;-webkit-text-stroke:0.35px #dadada;">eyval,&#32;</div>
<div class="t" style="left:1192.19px;top:185.05px;font-size:15.3px;line-height:15.3px;color:#4ec9b0;letter-spacing:-0.002px;font-family:'Liberation Mono',monospace;-webkit-text-stroke:0.35px #4ec9b0;">_Traits</div>
<div class="t" style="left:1256.38px;top:185.05px;font-size:15.3px;line-height:15.3px;color:#dadada;letter-spacing:-0.002px;font-family:'Liberation Mono',monospace;-webkit-text-stroke:0.35px #dadada;">::_Kfn(_Bound-&gt;_Myva</div>
<div class="r" style="left:1128px;top:242px;width:110px;height:24px;background:#2d2d2d;border:1px solid #434343;border-left:none;"></div>
<div class="t" style="left:1128.00px;top:248.15px;font-size:14px;line-height:14px;color:#e6e6e6;letter-spacing:-0.595px;font-family:'Liberation Sans',sans-serif;">elliSense&#32;an.</div>
<svg style="left:1208px;top:251px" width="10" height="6"><path d="M0 0h9l-4.5 4.5z" fill="#d0d0d0"/></svg>
<svg style="left:1221px;top:246px" width="16" height="16"><path d="M2 14 L3 10 L11 2 L14 5 L6 13 Z" fill="#d8d8d8"/></svg>
<div class="t" style="left:1128.00px;top:267.05px;font-size:15.3px;line-height:15.3px;color:#dadada;letter-spacing:-0.002px;font-family:'Liberation Mono',monospace;-webkit-text-stroke:0.35px #dadada;">_Keyval)&#32;</div>
<div class="t" style="left:1210.53px;top:267.05px;font-size:15.3px;line-height:15.3px;color:#569cd6;letter-spacing:-0.002px;font-family:'Liberation Mono',monospace;-webkit-text-stroke:0.35px #569cd6;">const</div>
<div class="t" style="left:1256.38px;top:267.05px;font-size:15.3px;line-height:15.3px;color:#dadada;letter-spacing:-0.004px;font-family:'Liberation Mono',monospace;-webkit-text-stroke:0.35px #dadada;">&#32;{</div>
<div class="t" style="left:1128.00px;top:307.05px;font-size:15.3px;line-height:15.3px;color:#dadada;letter-spacing:-0.002px;font-family:'Liberation Mono',monospace;-webkit-text-stroke:0.35px #dadada;">arent,&#32;</div>
<div class="t" style="left:1192.19px;top:307.05px;font-size:15.3px;line-height:15.3px;color:#4ec9b0;letter-spacing:-0.002px;font-family:'Liberation Mono',monospace;-webkit-text-stroke:0.35px #4ec9b0;">_Tree_child</div>
<div class="t" style="left:1293.06px;top:307.05px;font-size:15.3px;line-height:15.3px;color:#dadada;letter-spacing:-0.004px;font-family:'Liberation Mono',monospace;-webkit-text-stroke:0.35px #dadada;">::</div>
<div class="t" style="left:1311.40px;top:307.05px;font-size:15.3px;line-height:15.3px;color:#dcdcaa;letter-spacing:-0.002px;font-family:'Liberation Mono',monospace;-webkit-text-stroke:0.35px #dcdcaa;">_Right</div>
<div class="t" style="left:1366.42px;top:307.05px;font-size:15.3px;line-height:15.3px;color:#dadada;letter-spacing:-0.003px;font-family:'Liberation Mono',monospace;-webkit-text-stroke:0.35px #dadada;">},&#32;</div>
<div class="t" style="left:1393.93px;top:307.05px;font-size:15.3px;line-height:15.3px;color:#569cd6;letter-spacing:-0.002px;font-family:'Liberation Mono',monospace;-webkit-text-stroke:0.35px #569cd6;">_Scar</div>
<div class="r" style="left:1128px;top:346px;width:312px;height:2px;background:#3a3a3a;"></div>
<div class="r" style="left:1128px;top:363px;width:312px;height:2px;background:#3a3a3a;"></div>
<div class="t" style="left:1128.00px;top:390.05px;font-size:15.3px;line-height:15.3px;color:#dadada;letter-spacing:-0.002px;font-family:'Liberation Mono',monospace;-webkit-text-stroke:0.35px #dadada;">e-&gt;_Myval),&#32;_Keyval))&#32;{</div>
<div class="r" style="left:1128px;top:589px;width:312px;height:21px;background:#2a2a2a;"></div>
<div class="r" style="left:1128px;top:593px;width:150px;height:11px;background:#4d4d4d;"></div>
<svg style="left:1355px;top:594px" width="8" height="11"><path d="M0 0L7 5.5L0 11Z" fill="#9a9a9a"/></svg>
<div class="t" style="left:1395.60px;top:592.65px;font-size:14px;line-height:14px;color:#e8e8e8;letter-spacing:0.000px;font-family:'Liberation Sans',sans-serif;font-weight:bold;">Zeile:&#32;1</div>
<div class="r" style="left:1131px;top:614px;width:309px;height:347px;background:#262626;border-left:1px solid #3a3a3a;"></div>
<div class="r" style="left:1140px;top:619px;width:300px;height:3px;background:#6a5acd;"></div>
<div class="r" style="left:1140px;top:622px;width:300px;height:319px;background:#262626;border-left:1px solid #3c3c3c;"></div>
<div class="t" style="left:1144.90px;top:625.15px;font-size:14px;line-height:14px;color:#e6e6e6;letter-spacing:-0.042px;font-family:'Liberation Sans',sans-serif;">Ausgabe</div>
<div class="r" style="left:1209px;top:627px;width:231px;height:8px;background-image:linear-gradient(45deg,#474747 25%,transparent 25%,transparent 75%,#474747 75%),linear-gradient(45deg,#474747 25%,transparent 25%,transparent 75%,#474747 75%);background-size:4px 4px;background-position:0 0,2px 2px;"></div>
<div class="t" style="left:1148.90px;top:653.65px;font-size:14px;line-height:14px;color:#cfcfcf;letter-spacing:-0.164px;font-family:'Liberation Sans',sans-serif;">Ausgabe&#32;anzeigen&#32;von:</div>
<div class="r" style="left:1302px;top:648px;width:138px;height:24px;background:#333333;"></div>
<div class="t" style="left:1307.00px;top:654.15px;font-size:14px;line-height:14px;color:#e6e6e6;letter-spacing:0.203px;font-family:'Liberation Sans',sans-serif;">Debuggen</div>
<div class="r" style="left:1141px;top:677px;width:299px;height:264px;overflow:hidden;">
<div class="t" style="left:12.599999999999909px;top:-3.44px;font-family:Liberation Mono,monospace;font-size:14.1px;line-height:14.1px;color:#d6d6d6;letter-spacing:0.01px">"ISOcores_tutorial_gui_tc.exe" (Wi</div>
<div class="t" style="left:12.599999999999909px;top:14.56px;font-family:Liberation Mono,monospace;font-size:14.1px;line-height:14.1px;color:#d6d6d6;letter-spacing:0.01px">"ISOcores_tutorial_gui_tc.exe" (Wi</div>
<div class="t" style="left:12.599999999999909px;top:32.56px;font-family:Liberation Mono,monospace;font-size:14.1px;line-height:14.1px;color:#d6d6d6;letter-spacing:0.01px">Der Thread 0x4c30 hat mit Code 0 (</div>
<div class="t" style="left:12.599999999999909px;top:50.56px;font-family:Liberation Mono,monospace;font-size:14.1px;line-height:14.1px;color:#d6d6d6;letter-spacing:0.01px">TASK ID  4</div>
<div class="t" style="left:12.599999999999909px;top:68.56px;font-family:Liberation Mono,monospace;font-size:14.1px;line-height:14.1px;color:#d6d6d6;letter-spacing:0.01px">Der Thread 'Thread (pooled)' (0x44</div>
<div class="t" style="left:12.599999999999909px;top:86.56px;font-family:Liberation Mono,monospace;font-size:14.1px;line-height:14.1px;color:#d6d6d6;letter-spacing:0.01px">Der Thread 'Thread (pooled)' (0x7d</div>
<div class="t" style="left:12.599999999999909px;top:104.56px;font-family:Liberation Mono,monospace;font-size:14.1px;line-height:14.1px;color:#d6d6d6;letter-spacing:0.01px">Der Thread 'Thread (pooled)' (0x4c</div>
<div class="t" style="left:12.599999999999909px;top:122.56px;font-family:Liberation Mono,monospace;font-size:14.1px;line-height:14.1px;color:#d6d6d6;letter-spacing:0.01px">Der Thread 'Thread (pooled)' (0x85</div>
<div class="t" style="left:12.599999999999909px;top:140.56px;font-family:Liberation Mono,monospace;font-size:14.1px;line-height:14.1px;color:#d6d6d6;letter-spacing:0.01px">Der Thread 0x5ee0 hat mit Code 0 (</div>
<div class="t" style="left:12.599999999999909px;top:158.56px;font-family:Liberation Mono,monospace;font-size:14.1px;line-height:14.1px;color:#d6d6d6;letter-spacing:0.01px">Der Thread 0x7fec hat mit Code 0 (</div>
<div class="t" style="left:12.599999999999909px;top:176.56px;font-family:Liberation Mono,monospace;font-size:14.1px;line-height:14.1px;color:#d6d6d6;letter-spacing:0.01px">Der Thread 0x5e34 hat mit Code 0 (</div>
<div class="t" style="left:12.599999999999909px;top:194.56px;font-family:Liberation Mono,monospace;font-size:14.1px;line-height:14.1px;color:#d6d6d6;letter-spacing:0.01px">Der Thread 0x5d2c hat mit Code 0 (</div>
<div class="t" style="left:12.599999999999909px;top:212.56px;font-family:Liberation Mono,monospace;font-size:14.1px;line-height:14.1px;color:#d6d6d6;letter-spacing:0.01px">OperationRateControlWidget::on_com</div>
<div class="t" style="left:12.599999999999909px;top:230.56px;font-family:Liberation Mono,monospace;font-size:14.1px;line-height:14.1px;color:#d6d6d6;letter-spacing:0.01px">Der Thread 0x6708 hat mit Code 0 (</div>
</div>
<div class="r" style="left:1141px;top:941px;width:299px;height:18px;background:#2a2a2a;"></div>
<div class="r" style="left:1160px;top:946px;width:195px;height:9px;background:#4d4d4d;"></div>
<svg style="left:1146px;top:945px" width="8" height="11"><path d="M7 0L0 5.5L7 11Z" fill="#9a9a9a"/></svg>
<div class="r" style="left:1140px;top:959px;width:300px;height:1px;background:#3a3a3a;"></div>
<div class="t" style="left:1146.70px;top:964.15px;font-size:14px;line-height:14px;color:#bcbcbc;letter-spacing:0.777px;font-family:'Liberation Sans',sans-serif;">Aufrufliste</div>
<div class="t" style="left:1227.80px;top:964.15px;font-size:14px;line-height:14px;color:#bcbcbc;letter-spacing:0.331px;font-family:'Liberation Sans',sans-serif;">Haltepunkte</div>
<div class="t" style="left:1320.00px;top:964.15px;font-size:14px;line-height:14px;color:#bcbcbc;letter-spacing:0.234px;font-family:'Liberation Sans',sans-serif;">Ausnahmeeinstellu</div>
<div class="r" style="left:1127px;top:992px;width:313px;height:29px;background:#851d31;"></div>
<div class="r" style="left:0px;top:1021px;width:1440px;height:1px;background:#4a4a4a;"></div>
<svg style="left:1133px;top:998px" width="18" height="18"><path d="M2 16 L3.5 11 L13 1.5 L16 4.5 L6.5 14 Z" stroke="#e8d8dc" stroke-width="1.3" fill="none"/></svg>
<div class="t" style="left:1158.90px;top:999.15px;font-size:14px;line-height:14px;color:#f0e6e8;letter-spacing:0.089px;font-family:'Liberation Sans',sans-serif;">Mehr&#32;als&#32;99</div>
<svg style="left:1258px;top:997px" width="20" height="20"><circle cx="4" cy="3.5" r="2.5" stroke="#f0f0f0" stroke-width="1.5" fill="none"/><circle cx="12" cy="7" r="2.5" stroke="#f0f0f0" stroke-width="1.5" fill="none"/><circle cx="4" cy="16" r="2.5" stroke="#f0f0f0" stroke-width="1.5" fill="none"/><circle cx="13" cy="15" r="4.5" fill="#f0f0f0"/><path d="M4 6 V13.5" stroke="#f0f0f0" stroke-width="1.5"/></svg>
<div class="t" style="left:1284.40px;top:999.15px;font-size:14px;line-height:14px;color:#f0e6e8;letter-spacing:0.131px;font-family:'Liberation Sans',sans-serif;">PICOR-754-deactivate-th</div>
</body></html>
